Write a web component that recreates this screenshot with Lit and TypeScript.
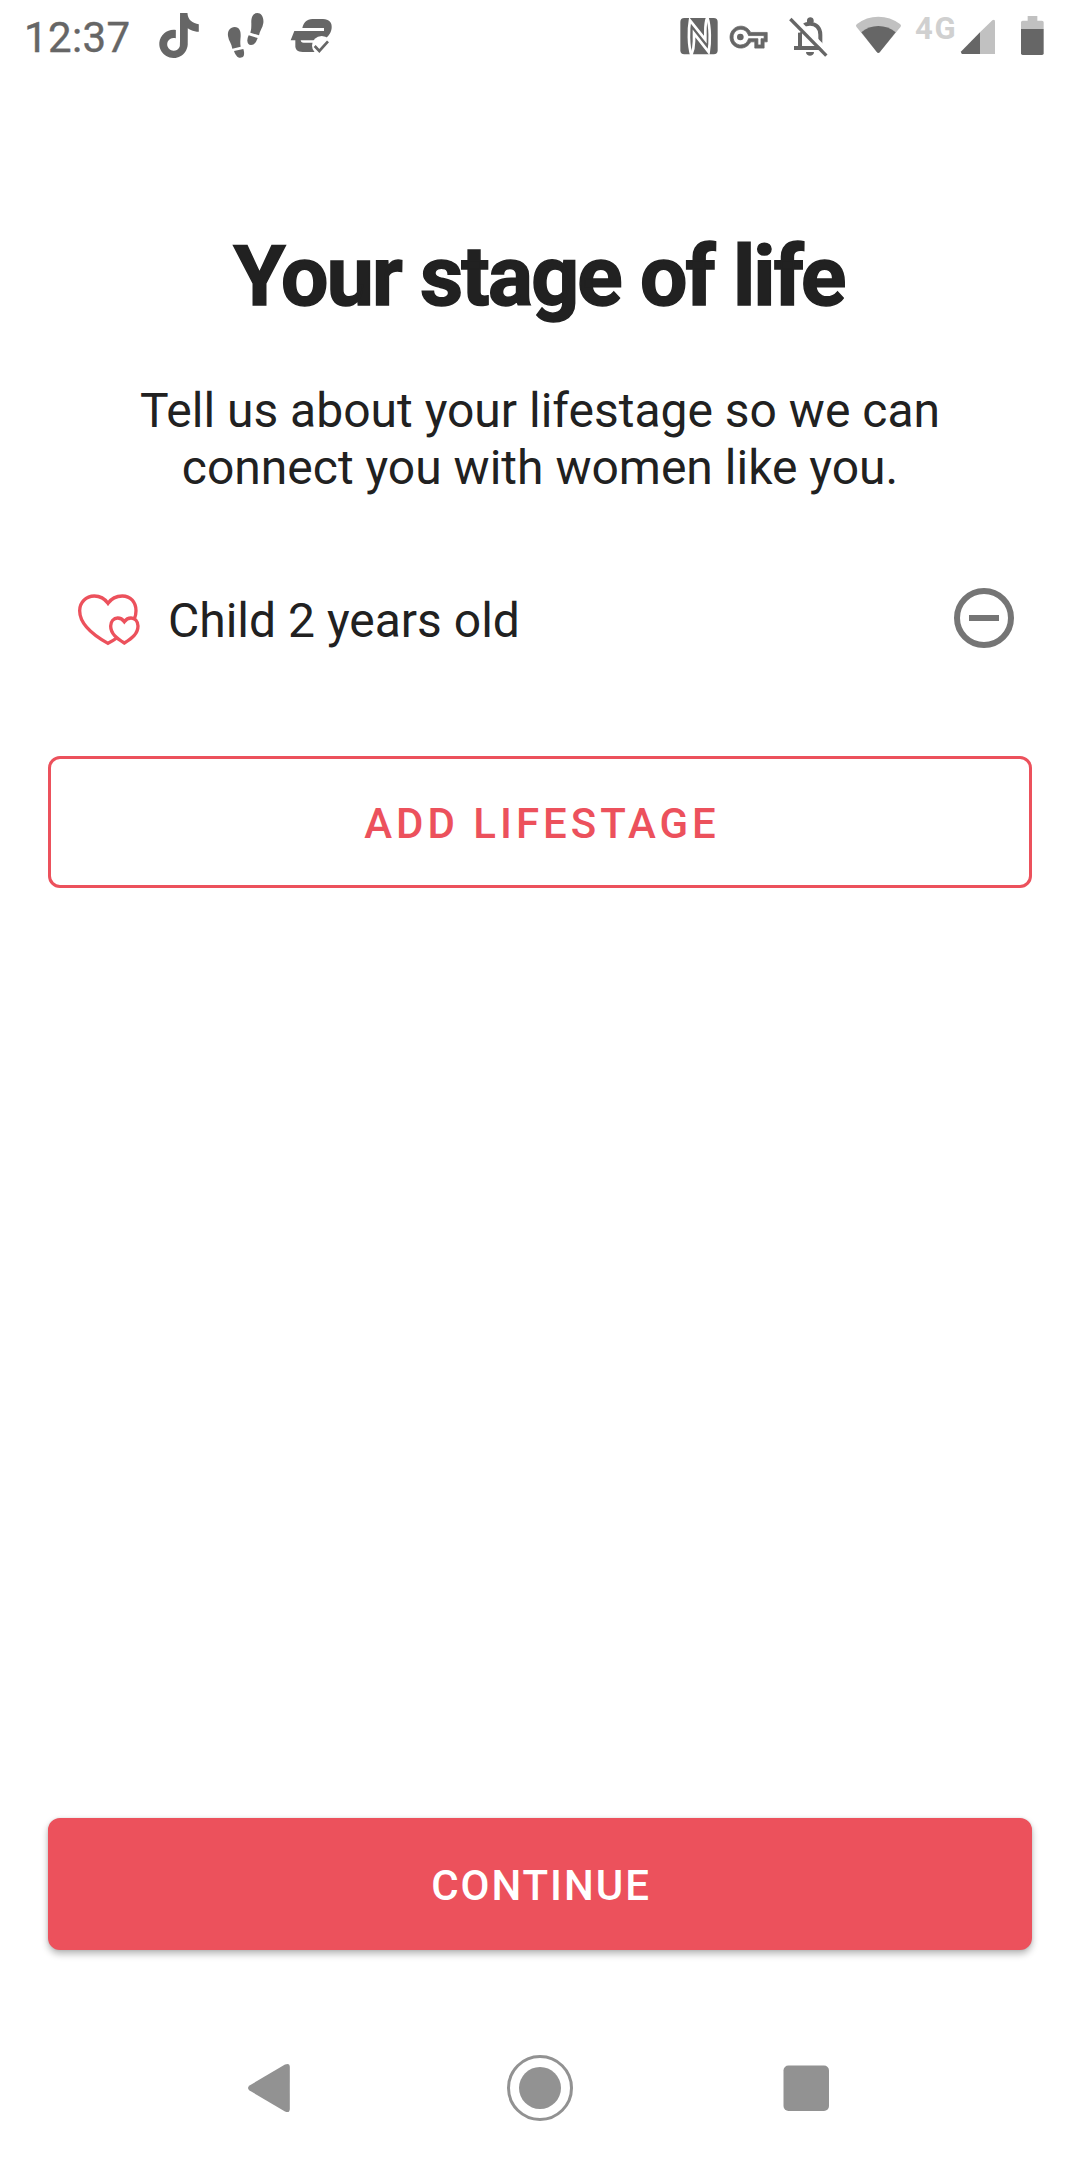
import { LitElement, html, css } from "lit";
import { customElement, property } from "lit/decorators.js";

/* Icons of the status bar share a 72px tall strip; one CSS pixel is 3 units. */

@customElement("status-bar")
export class StatusBar extends LitElement {
  static styles = css`
    :host {
      display: flex;
      align-items: flex-start;
      justify-content: space-between;
      height: 72px;
      box-sizing: border-box;
      color: #666;
    }
    .group { display: flex; align-items: flex-start; }
    .start { padding-left: 24px; }
    .end { padding-right: 36px; }
    .time {
      margin-top: 13px;
      width: 107px;
      font-size: 42px;
      font-weight: 400;
      letter-spacing: 0.4px;
      line-height: 49px;
      white-space: nowrap;
      -webkit-text-stroke: 0.4px #666;
    }
    .network {
      margin-top: 11px;
      margin-left: 13px;
      width: 42px;
      font-size: 31px;
      font-weight: 700;
      letter-spacing: 1.8px;
      line-height: 36px;
      color: #d0d0d0;
      white-space: nowrap;
    }
    svg { display: block; height: 72px; flex: none; fill: #666; }
    .tiktok { width: 42px; margin-left: 27px; }
    .steps { width: 38px; margin-left: 27px; }
    .vpn-app { width: 44px; margin-left: 24px; }
    .nfc { width: 40px; }
    .key { width: 40px; margin-left: 9px; }
    .bell { width: 40px; margin-left: 20px; }
    .wifi { width: 47px; margin-left: 26px; }
    .signal { width: 36px; margin-left: 3px; }
    .battery { width: 24px; margin-left: 24px; }
    .light { fill: #c1c1c1; }
    .line { fill: none; stroke: #666; }
    .cut { fill: none; stroke: #fff; }
    .blank { fill: #fff; }
  `;

  render() {
    return html`
      <div class="group start">
        <div class="time">12:37</div>
        <svg class="tiktok" viewBox="474 0 126 216">
          <path transform="translate(469 39) scale(5.68 5.62)" d="M12.525.02c1.31-.02 2.61-.01 3.91-.02.08 1.53.63 3.09 1.75 4.17 1.12 1.11 2.7 1.62 4.24 1.79v4.03c-1.44-.05-2.89-.35-4.2-.97-.57-.26-1.1-.59-1.62-.93-.01 2.92.01 5.84-.02 8.75-.08 1.4-.54 2.79-1.35 3.94-1.31 1.92-3.58 3.17-5.91 3.21-1.43.08-2.86-.31-4.08-1.03-2.02-1.19-3.44-3.37-3.65-5.71-.02-.5-.03-1-.01-1.49.18-1.9 1.12-3.72 2.58-4.96 1.66-1.44 3.98-2.13 6.15-1.72.02 1.48-.04 2.96-.04 4.44-.99-.32-2.15-.23-3.02.37-.63.41-1.11 1.04-1.36 1.75-.21.51-.15 1.07-.14 1.61.24 1.64 1.82 3.02 3.5 2.87 1.12-.01 2.19-.66 2.77-1.61.19-.33.4-.67.41-1.06.1-1.79.06-3.57.07-5.36.01-4.03-.01-8.05.02-12.07z"/>
        </svg>
        <svg class="steps" viewBox="681 0 114 216">
          <path d="M684 108C682 92 691 81 704 81c14 0 19 12 18 28-1 12-2 20 0 31l-25 6c-2-15-11-23-13-38z"/>
          <path d="M702 153l28-6c3 10 4 21-3 25-13 5-20-5-25-19z"/>
          <path d="M790 69c2-17-6-30-18-30-14 0-19 14-18 31 0 11 0 19-3 28l26 8c2-14 11-22 13-37z"/>
          <path d="M746 106l27 8c-4 12-10 21-20 21-12-1-14-15-7-29z"/>
        </svg>
        <svg class="vpn-app" viewBox="867 0 132 216">
          <path d="M907 84c4-16 13-27 30-27h32c18 0 28 11 26 27-2 18-14 32-31 37h-92l11-28h89v-9z"/>
          <path d="M886 119h16c0 6 3 9 9 9h36v28h-39c-15 0-23-7-22-20z"/>
          <circle class="blank" cx="965" cy="137" r="29"/>
          <path class="line" stroke-width="8" d="M944 138l14 15 26-29"/>
        </svg>
      </div>
      <div class="group end">
        <svg class="nfc" viewBox="60 0 120 216">
          <rect x="61" y="54" width="112" height="109" rx="12"/>
          <path class="cut" stroke-width="8" d="M94 165C85 137 85 88 90 61l46 58V94c0-16 1-30 6-42"/>
          <path class="cut" stroke-width="8" d="M142 52c9 28 9 76 4 104l-44-56v24c0 14-3 29-8 41"/>
        </svg>
        <svg class="key" viewBox="207 0 120 216">
          <path stroke="#666" stroke-width=".5" transform="translate(210 55) scale(4.65 4.7)" d="M22 19h-6v-4h-2.68c-1.14 2.42-3.6 4-6.32 4-3.86 0-7-3.14-7-7s3.14-7 7-7c2.72 0 5.17 1.58 6.32 4H24v6h-2v4zm-4-2h2v-4h2v-2H11.94l-.23-.67C11.01 8.34 9.11 7 7 7c-2.76 0-5 2.24-5 5s2.24 5 5 5c2.11 0 4.01-1.34 4.71-3.33l.23-.67H18v4z"/>
          <circle cx="241" cy="111" r="10"/>
        </svg>
        <svg class="bell" viewBox="387 0 120 216">
          <path class="line" stroke-width="12" d="M420 145V104c0-22 12-33 30-33s31 13 31 33v41M402 144h90"/>
          <path d="M441 66v-5c0-12 20-12 20 0v5zM438 156h24c0 15-24 15-24 0z"/>
          <path class="cut" stroke-width="14" d="M401 52l108 109"/>
          <path class="blank" d="M390 66l36-2 4 26-18 14z"/>
          <path class="line" stroke-width="12" d="M420 98v46"/>
          <path class="line" stroke-width="10" d="M391 57l108 110"/>
        </svg>
        <svg class="wifi" viewBox="45 0 141 216">
          <path class="light" d="M49 80q-3-5 2-8Q79 50 115 50t65 22q5 3 2 8l-63 77q-4 4-8 0z"/>
          <path d="M64 97Q86 78 115 78t52 19l-48 60q-4 4-8 0z"/>
        </svg>
        <div class="network">4G</div>
        <svg class="signal" viewBox="363 0 108 216">
          <path class="light" d="M423 162V97l37-36q8-5 8 4v97z"/>
          <path d="M423 97v65h-54q-5-3-2-8z"/>
        </svg>
        <svg class="battery" viewBox="540 0 72 216">
          <path class="light" d="M543 88V67q0-5 5-5h15V48h29v14h14q5 0 5 5v21z"/>
          <path d="M543 87h68v73q0 5-5 5h-58q-5 0-5-5z"/>
        </svg>
      </div>
    `;
  }
}

@customElement("lifestage-row")
export class LifestageRow extends LitElement {
  @property() label = "";

  static styles = css`
    :host {
      display: flex;
      align-items: center;
      height: 72px;
      padding: 0 63px 0 75px;
    }
    svg { display: block; flex: none; }
    .hearts { width: 69px; height: 72px; fill: none; stroke: #ec515c; stroke-width: 10; }
    .label {
      flex: 1;
      margin: 5px 0 0 24px;
      font-size: 48px;
      line-height: 57px;
      color: #212121;
    }
    .remove { width: 66px; height: 66px; fill: none; stroke: #757575; stroke-width: 6; }
  `;

  render() {
    return html`
      <svg class="hearts" viewBox="45 36 207 216">
        <path d="M170 204Q158 213 144 220C94 192 59 158 59 122C59 97 78 78 103 78C122 78 135 87 144 100C153 87 166 78 187 78C212 78 228 97 228 122Q228 135 223 147"/>
        <path d="M193 219C170 205 152 191 152 168C152 154 161 144 173 144C182 144 188 148 193 155C198 148 204 144 213 144C225 144 234 154 234 168C234 191 216 205 193 219Z"/>
      </svg>
      <div class="label">${this.label}</div>
      <svg class="remove" viewBox="0 0 66 66">
        <circle cx="33" cy="33" r="27"/>
        <path d="M18 33h30"/>
      </svg>
    `;
  }
}

@customElement("nav-bar")
export class NavBar extends LitElement {
  static styles = css`
    :host {
      display: flex;
      align-items: center;
      justify-content: space-between;
      height: 144px;
      box-sizing: border-box;
      padding: 0 238px;
    }
    svg { display: block; width: 70px; height: 70px; fill: #929292; }
    .ring { fill: none; stroke: #929292; stroke-width: 3; }
  `;

  render() {
    return html`
      <svg viewBox="0 0 70 70">
        <path d="M11.500 32.500L47 11.500Q51.800 9.500 51.800 14V56Q51.800 60.500 47 58.500L11.500 37.500Q8.500 35 11.500 32.500Z"/>
      </svg>
      <svg viewBox="0 0 70 70">
        <circle class="ring" cx="35" cy="35" r="31.500"/>
        <circle cx="35" cy="35" r="21"/>
      </svg>
      <svg viewBox="0 0 70 70"><rect x="11.500" y="12.500" width="45.500" height="45.500" rx="5"/></svg>
    `;
  }
}

@customElement("app-root")
export class AppRoot extends LitElement {
  static styles = css`
    :host {
      display: flex;
      flex-direction: column;
      height: 2160px;
      background: #fff;
      font-family: Roboto, "Noto Sans", sans-serif;
      color: #212121;
    }
    main { flex: 1; display: flex; flex-direction: column; padding-top: 155px; }
    h1 {
      margin: 0;
      text-align: center;
      font-size: 84px;
      line-height: 99px;
      font-weight: 700;
      letter-spacing: -1.8px;
      padding-right: 1.8px;
      -webkit-text-stroke: 1.5px #212121;
    }
    p { margin: 56px 0 86px; text-align: center; font-size: 48px; line-height: 57px; }
    button {
      display: block;
      height: 132px;
      margin: 0 48px;
      box-sizing: border-box;
      border: 3px solid #ec515c;
      border-radius: 12px;
      font-family: inherit;
      font-size: 42px;
      line-height: 49px;
      font-weight: 500;
      text-transform: uppercase;
    }
    .add {
      margin-top: 102px;
      padding: 3px 0 0 4px;
      background: transparent;
      color: #ec515c;
      letter-spacing: 4px;
    }
    .continue {
      margin-top: auto;
      margin-bottom: 66px;
      padding: 3px 0 0 2px;
      background: #ec515c;
      color: #fff;
      letter-spacing: 1.95px;
      box-shadow: 0 4px 7px rgba(0, 0, 0, 0.28), 0 0 3px rgba(0, 0, 0, 0.1);
    }
  `;

  render() {
    return html`
      <status-bar></status-bar>
      <main>
        <h1>Your stage of life</h1>
        <p>Tell us about your lifestage so we can<br>connect you with women like you.</p>
        <lifestage-row label="Child 2 years old"></lifestage-row>
        <button class="add">Add lifestage</button>
        <button class="continue">Continue</button>
      </main>
      <nav-bar></nav-bar>
    `;
  }
}
